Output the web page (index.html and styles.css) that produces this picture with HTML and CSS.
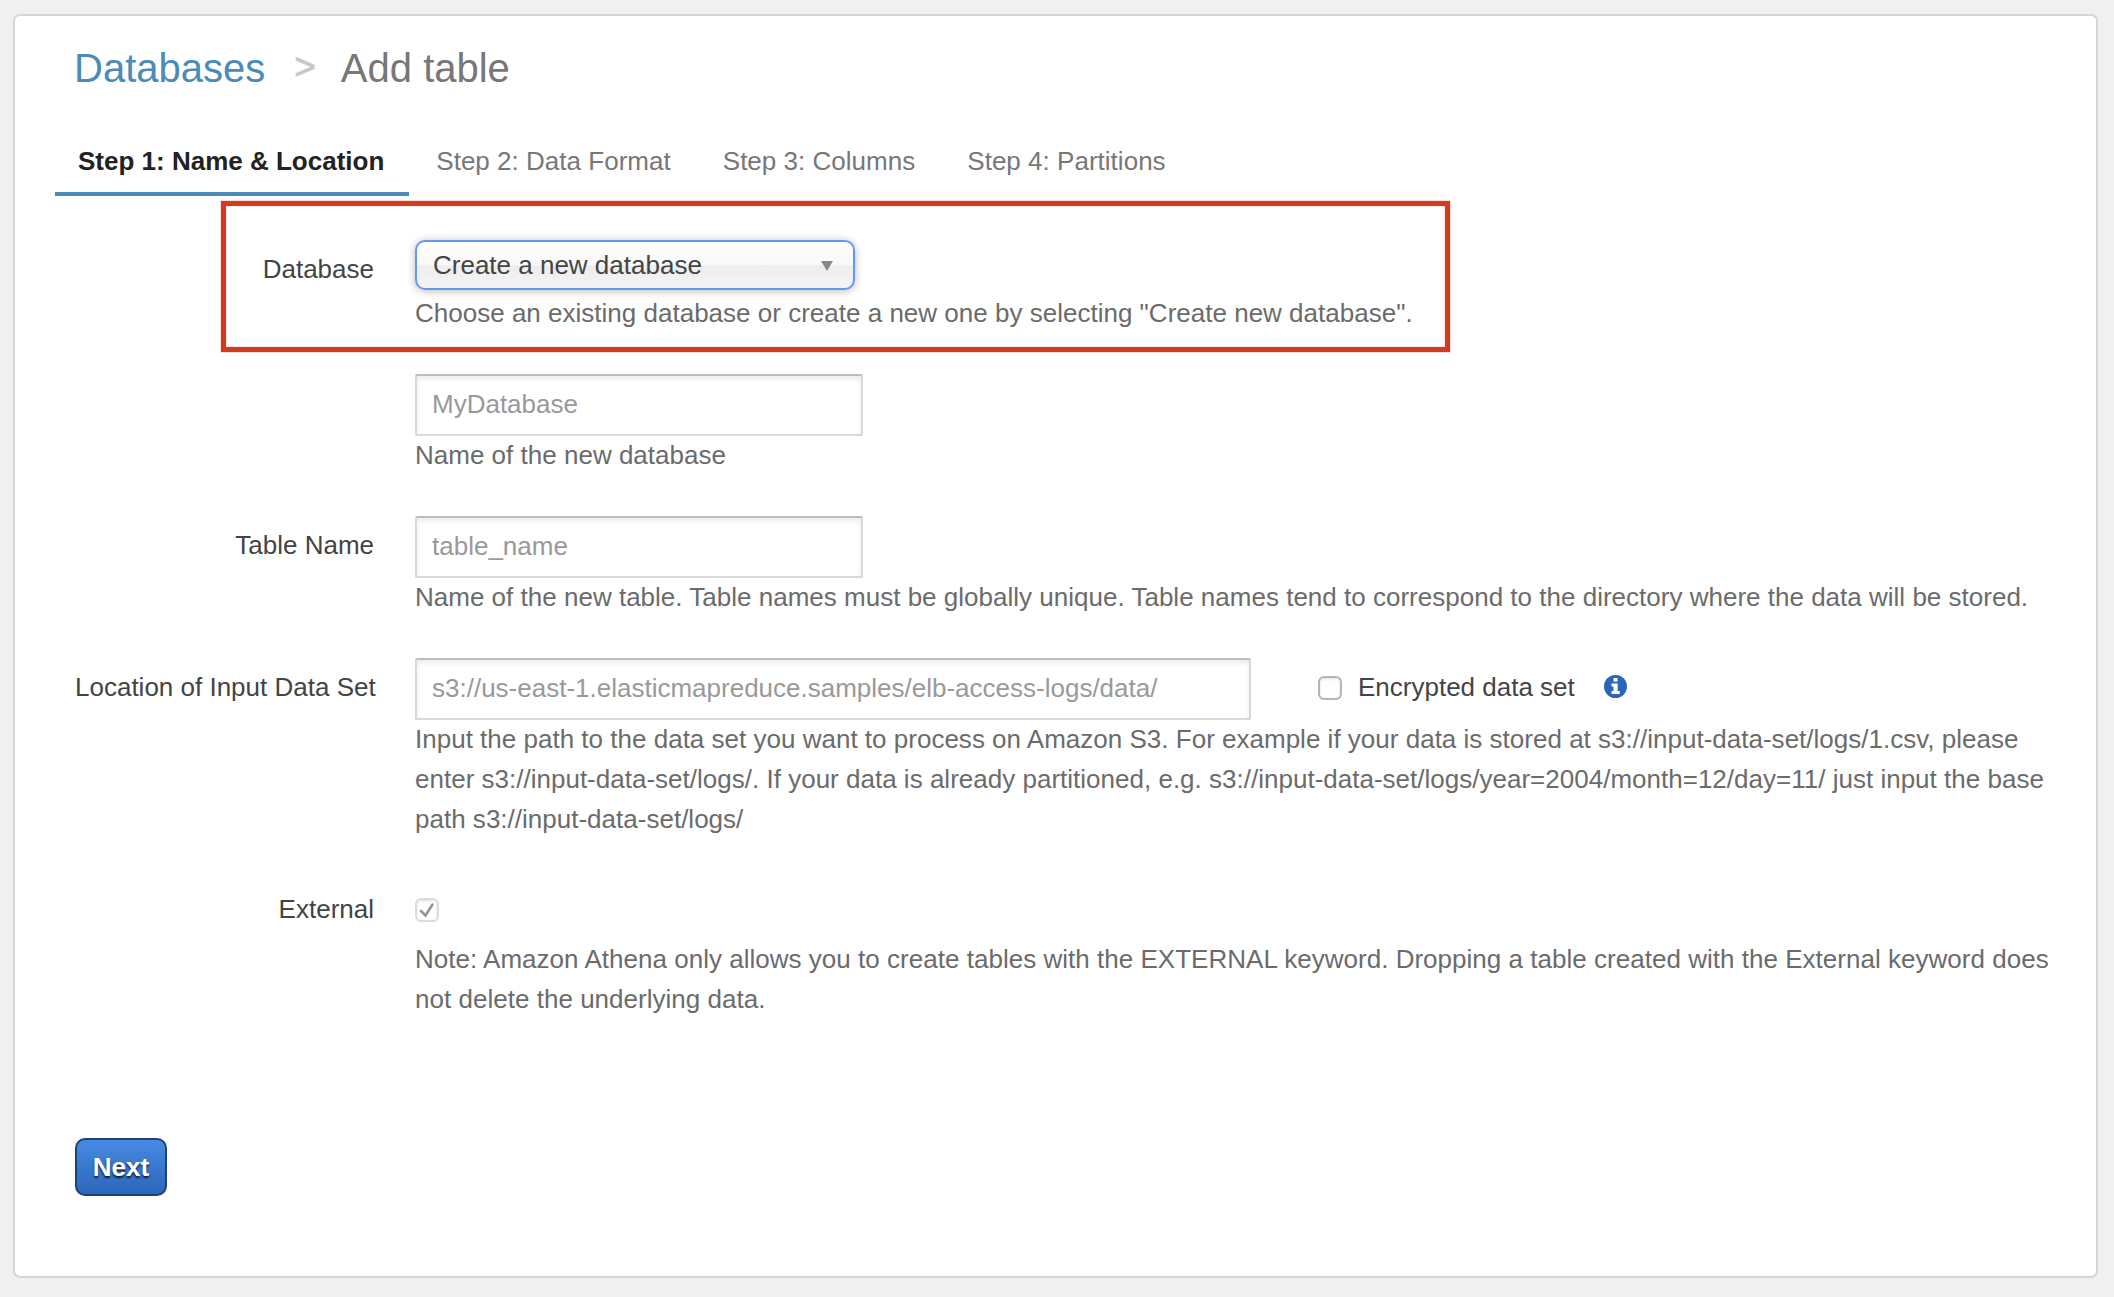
FILE: index.html
```html
<!DOCTYPE html>
<html lang="en">
<head>
<meta charset="utf-8">
<title>Add table</title>
<link rel="stylesheet" href="styles.css">
</head>
<body>
<main class="card">
  <h1 class="crumbs"><a class="crumb-link">Databases</a><span class="crumb-sep">&gt;</span><span>Add table</span></h1>
  <nav class="tabs">
    <a class="tab tab-active">Step 1: Name &amp; Location</a>
    <a class="tab">Step 2: Data Format</a>
    <a class="tab">Step 3: Columns</a>
    <a class="tab">Step 4: Partitions</a>
  </nav>
  <form class="form">
    <div class="row highlighted">
      <label class="label">Database</label>
      <div class="field">
        <div class="select"><span>Create a new database</span><svg class="arrow" width="12" height="10" viewBox="0 0 12 10"><path d="M0 0H12L6 10Z" fill="#888"/></svg></div>
        <p class="help help-select">Choose an existing database or create a new one by selecting "Create new database".</p>
      </div>
    </div>
    <div class="row">
      <span class="label"></span>
      <div class="field">
        <input class="input" type="text" placeholder="MyDatabase">
        <p class="help">Name of the new database</p>
      </div>
    </div>
    <div class="row">
      <label class="label">Table Name</label>
      <div class="field">
        <input class="input" type="text" placeholder="table_name">
        <p class="help">Name of the new table. Table names must be globally unique. Table names tend to correspond to the directory where the data will be stored.</p>
      </div>
    </div>
    <div class="row">
      <label class="label">Location of Input Data Set</label>
      <div class="field">
        <div class="location">
          <input class="input input-wide" type="text" placeholder="s3://us-east-1.elasticmapreduce.samples/elb-access-logs/data/">
          <span class="checkbox"></span>
          <span class="check-label">Encrypted data set</span>
          <svg class="info" width="23" height="23" viewBox="0 0 23 23"><circle cx="11.5" cy="11.5" r="11.5" fill="#2a65b8"/><path fill="#fff" d="M9.5 3h4v3.4h-4zM7.5 8.5h6.2v7.5h2v3H7.5v-3h2v-4.6h-2z"/></svg>
        </div>
        <p class="help">Input the path to the data set you want to process on Amazon S3. For example if your data is stored at s3://input-data-set/logs/1.csv, please enter s3://input-data-set/logs/. If your data is already partitioned, e.g. s3://input-data-set/logs/year=2004/month=12/day=11/ just input the base path s3://input-data-set/logs/</p>
      </div>
    </div>
    <div class="row">
      <label class="label">External</label>
      <div class="field">
        <span class="checkbox checkbox-disabled"><svg width="20" height="20" viewBox="0 0 20 20"><path d="M4 11L8.5 15.5L15.5 4.5" fill="none" stroke="#949494" stroke-width="2.6" stroke-linecap="round"/></svg></span>
        <p class="help help-note">Note: Amazon Athena only allows you to create tables with the EXTERNAL keyword. Dropping a table created with the External keyword does not delete the underlying data.</p>
      </div>
    </div>
  </form>
  <button class="next" type="button">Next</button>
</main>
</body>
</html>
```
FILE: styles.css
```css
*, ::before, ::after { box-sizing: border-box; }

body {
  margin: 0;
  padding: 14px 16px 19px 13px;
  height: 1297px;
  background: #f0f0f0;
  color: #444;
  font: 26px/40px "Liberation Sans", Arial, sans-serif;
}

.card {
  height: 1264px;
  padding: 30px 40px 0 60px;
  background: #fff;
  border: 2px solid #d6d6d6;
  border-radius: 7px;
}

.crumbs {
  display: flex;
  margin: 0 0 0 -1px;
  font-size: 40px;
  font-weight: 400;
  line-height: 44px;
  color: #777;
}

.crumb-link { color: #4b8bb8; }

.crumb-sep {
  margin: -1px 25px 0 29px;
  font-size: 37px;
  color: #c8c8c8;
  -webkit-text-stroke: 0.8px #c8c8c8;
}

.tabs {
  display: flex;
  gap: 2px;
  margin: 51px 0 0 -20px;
}

.tab {
  height: 55px;
  padding: 0 25px;
  color: #777;
  white-space: nowrap;
}

.tab + .tab { letter-spacing: 0.02px; }

.tab-active {
  padding: 0 25px 0 23px;
  border-bottom: 4px solid #4b8bb8;
  color: #222;
  font-weight: 700;
}

.form {
  display: flex;
  flex-direction: column;
  gap: 41px;
  margin-top: 44px;
}

.row {
  display: grid;
  grid-template-columns: 300px minmax(0, 1642px);
  column-gap: 40px;
}

.highlighted { position: relative; }

.highlighted::after {
  content: "";
  position: absolute;
  top: -39px;
  left: 146px;
  width: 1229px;
  height: 151px;
  border: 5px solid #d43a20;
  box-shadow: 0 0 1px #d43a20, inset 0 0 1px #d43a20;
}

.label {
  padding: 9px 1px 0 0;
  text-align: right;
  white-space: nowrap;
}

.select {
  display: flex;
  align-items: center;
  justify-content: space-between;
  width: 440px;
  height: 50px;
  padding: 0 20px 1px 16px;
  border: 2px solid #6497f3;
  border-radius: 10px;
  background: linear-gradient(#fff, #f9f9f9 49%, #ededed 52%, #f4f4f4);
  box-shadow: 0 1px 9px rgba(0, 0, 0, 0.28);
}

.arrow { margin-top: 3px; }

.help { margin: -1px 0 0; color: #6b6b6b; letter-spacing: 0.008px; }
.help-select { margin-top: 3px; }
.help-note { margin-top: 17px; letter-spacing: 0.022px; }

.input {
  display: block;
  width: 448px;
  height: 62px;
  padding: 8px 15px 10px;
  border: 2px solid #d9d9d9;
  border-top-color: #bcbcbc;
  border-radius: 2px;
  background: #fff;
  box-shadow: inset 0 3px 5px rgba(0, 0, 0, 0.08);
  font: inherit;
}

.input::placeholder { color: #999; opacity: 1; }
.input-wide { width: 836px; }

.location { display: flex; align-items: flex-start; }
.location .checkbox { margin: 18px 16px 0 67px; }
.check-label { padding-top: 9px; white-space: nowrap; }
.info { margin: 17px 0 0 29px; }

.checkbox {
  display: block;
  width: 24px;
  height: 24px;
  border: 2px solid #b5b5b5;
  border-radius: 6px;
  background: #fff;
  box-shadow: inset 0 1px 3px rgba(0, 0, 0, 0.12);
}

.checkbox-disabled { margin-top: 18px; border-color: #dcdcdc; }
.checkbox svg { display: block; }

.next {
  display: block;
  width: 92px;
  height: 58px;
  margin-top: 119px;
  padding: 0;
  border: 2px solid #1d4278;
  border-radius: 10px;
  background: linear-gradient(#488ae3, #2c66b8);
  color: #fff;
  font: inherit;
  font-weight: 700;
  text-shadow: 0 2px 2px rgba(0, 0, 0, 0.75);
}
```
